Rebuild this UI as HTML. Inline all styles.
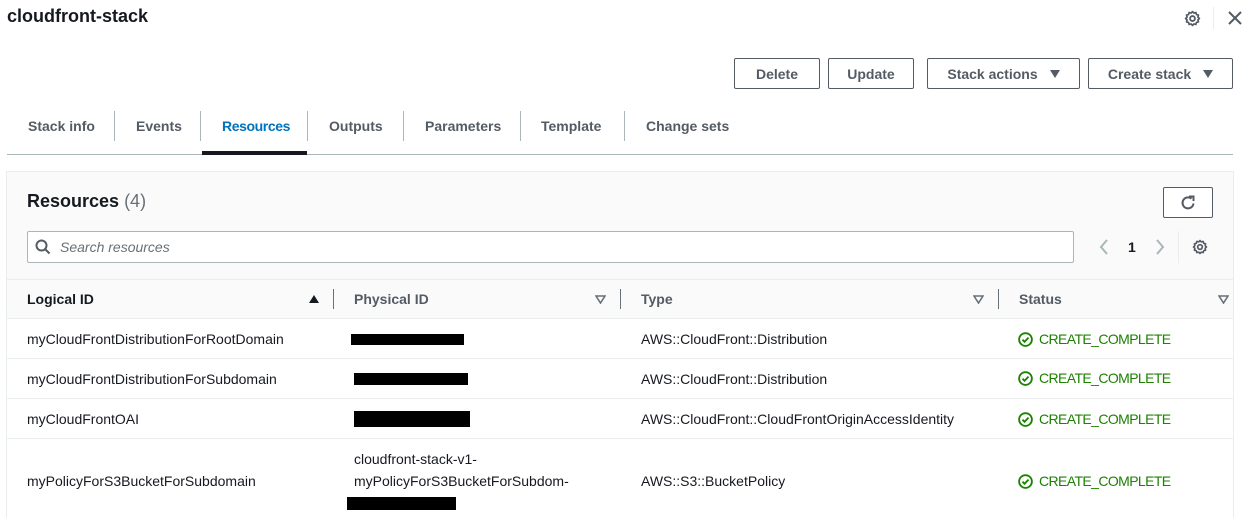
<!DOCTYPE html>
<html><head><style>
*{box-sizing:border-box;margin:0;padding:0}
html,body{width:1254px;height:518px;overflow:hidden}
body{background:#fff;font-family:"Liberation Sans",Arial,sans-serif;color:#16191f;position:relative;font-size:14px}
.a{position:absolute;white-space:nowrap}
.btn{position:absolute;top:58px;height:31px;border:1px solid #545b64;border-radius:2px;font-weight:bold;color:#545b64;font-size:14px;display:flex;align-items:center;justify-content:center;background:#fff}
.tri{display:inline-block;width:0;height:0;border-left:5px solid transparent;border-right:5px solid transparent;border-top:8px solid #545b64;margin-left:12px}
.tab{position:absolute;top:118px;font-weight:bold;color:#545b64;font-size:14px}
.tsep{position:absolute;top:111px;width:1px;height:30px;background:#aab7b8}
.hsep{position:absolute;top:289px;width:1px;height:20px;background:#687078}
.row{position:absolute;left:7px;width:1226px;height:1px;background:#eaeded}
.cell{position:absolute;font-size:14px;color:#16191f;white-space:nowrap}
.st{position:absolute;left:1018px;color:#1d8102;font-size:14px;display:flex;align-items:center;letter-spacing:-0.6px}
.st svg{margin-right:6px}
.bar{position:absolute;background:#000}
.dto{position:absolute;width:11px;height:9px}
</style></head><body>
<div class="a" style="left:7px;top:6px;font-size:18px;font-weight:bold">cloudfront-stack</div>
<svg class="a" style="left:1184px;top:10px" width="17" height="17" viewBox="0 0 16 16"><circle cx="8" cy="8" r="2.3" fill="none" stroke="#545b64" stroke-width="1.7"/><path d="M8 1.5l1.3 1.4 1.9-.5.5 1.9 1.9.5-.5 1.9 1.4 1.3-1.4 1.3.5 1.9-1.9.5-.5 1.9-1.9-.5L8 14.5l-1.3-1.4-1.9.5-.5-1.9-1.9-.5.5-1.9L1.5 8l1.4-1.3-.5-1.9 1.9-.5.5-1.9 1.9.5z" fill="none" stroke="#545b64" stroke-width="1.6" stroke-linejoin="round"/></svg>
<div class="a" style="left:1213px;top:7px;width:1px;height:22px;background:#eaeded"></div>
<svg class="a" style="left:1228px;top:11px" width="14" height="14" viewBox="0 0 14 14"><path d="M1 1L13 13M13 1L1 13" stroke="#545b64" stroke-width="2"/></svg>

<div class="btn" style="left:734px;width:86px">Delete</div>
<div class="btn" style="left:828px;width:86px">Update</div>
<div class="btn" style="left:927px;width:153px">Stack actions<span class="tri"></span></div>
<div class="btn" style="left:1088px;width:145px">Create stack<span class="tri"></span></div>

<div class="tab" style="left:28px">Stack info</div>
<div class="tsep" style="left:114px"></div>
<div class="tab" style="left:136px">Events</div>
<div class="tsep" style="left:200px"></div>
<div class="tab" style="left:222px;color:#0073bb;letter-spacing:-0.4px">Resources</div>
<div class="tsep" style="left:307px"></div>
<div class="tab" style="left:329px">Outputs</div>
<div class="tsep" style="left:403px"></div>
<div class="tab" style="left:425px">Parameters</div>
<div class="tsep" style="left:520px"></div>
<div class="tab" style="left:541px">Template</div>
<div class="tsep" style="left:624px"></div>
<div class="tab" style="left:646px">Change sets</div>
<div class="a" style="left:7px;top:154px;width:1226px;height:1px;background:#aab7b8"></div>
<div class="a" style="left:202px;top:151px;width:105px;height:4px;background:#16191f"></div>

<div class="a" style="left:6px;top:171px;width:1228px;height:360px;border:1px solid #eaeded;background:#fafafa"></div>
<div class="a" style="left:7px;top:319px;width:1226px;height:200px;background:#fff"></div>
<div class="a" style="left:27px;top:191px;font-size:18px;font-weight:bold">Resources <span style="font-weight:normal;color:#687078">(4)</span></div>
<div class="a" style="left:1163px;top:187px;width:50px;height:31px;border:1px solid #545b64;border-radius:2px;background:#fff"></div>
<svg class="a" style="left:1180px;top:195px" width="16" height="16" viewBox="0 0 16 16"><path d="M13.5 8.5A5.5 5.5 0 1 1 11.5 3.6" fill="none" stroke="#545b64" stroke-width="2"/><path d="M9 1.5h4.5V6" fill="none" stroke="#545b64" stroke-width="2"/></svg>
<div class="a" style="left:27px;top:231px;width:1047px;height:32px;border:1px solid #aab7b8;border-radius:2px;background:#fff"></div>
<svg class="a" style="left:35px;top:239px" width="16" height="16" viewBox="0 0 16 16"><circle cx="6.5" cy="6.5" r="5" fill="none" stroke="#545b64" stroke-width="2"/><path d="M10 10l4.5 4.5" stroke="#545b64" stroke-width="2"/></svg>
<div class="a" style="left:60px;top:239px;font-style:italic;color:#687078;font-size:14px">Search resources</div>
<svg class="a" style="left:1099px;top:239px" width="10" height="16" viewBox="0 0 10 16"><path d="M8 1L2 8l6 7" fill="none" stroke="#aab7b8" stroke-width="2"/></svg>
<div class="a" style="left:1128px;top:239px;font-weight:bold">1</div>
<svg class="a" style="left:1155px;top:239px" width="10" height="16" viewBox="0 0 10 16"><path d="M2 1l6 7-6 7" fill="none" stroke="#aab7b8" stroke-width="2"/></svg>
<div class="a" style="left:1178px;top:231px;width:1px;height:32px;background:#eaeded"></div>
<svg class="a" style="left:1192px;top:239px" width="16" height="16" viewBox="0 0 16 16"><circle cx="8" cy="8" r="2.3" fill="none" stroke="#545b64" stroke-width="1.7"/><path d="M8 1.5l1.3 1.4 1.9-.5.5 1.9 1.9.5-.5 1.9 1.4 1.3-1.4 1.3.5 1.9-1.9.5-.5 1.9-1.9-.5L8 14.5l-1.3-1.4-1.9.5-.5-1.9-1.9-.5.5-1.9L1.5 8l1.4-1.3-.5-1.9 1.9-.5.5-1.9 1.9.5z" fill="none" stroke="#545b64" stroke-width="1.6" stroke-linejoin="round"/></svg>

<div class="row" style="top:279px"></div>
<div class="cell" style="left:27px;top:291px;font-weight:bold">Logical ID</div>
<div class="a" style="left:309px;top:295px;width:0;height:0;border-left:5px solid transparent;border-right:5px solid transparent;border-bottom:8px solid #16191f"></div>
<div class="hsep" style="left:333px"></div>
<div class="cell" style="left:354px;top:291px;font-weight:bold;color:#545b64">Physical ID</div>
<svg class="dto" style="left:595px;top:295px" viewBox="0 0 11 9"><path d="M1 1h9L5.5 8z" fill="none" stroke="#687078" stroke-width="1.6"/></svg>
<div class="hsep" style="left:620px"></div>
<div class="cell" style="left:641px;top:291px;font-weight:bold;color:#545b64">Type</div>
<svg class="dto" style="left:973px;top:295px" viewBox="0 0 11 9"><path d="M1 1h9L5.5 8z" fill="none" stroke="#687078" stroke-width="1.6"/></svg>
<div class="hsep" style="left:998px"></div>
<div class="cell" style="left:1019px;top:291px;font-weight:bold;color:#545b64">Status</div>
<svg class="dto" style="left:1218px;top:295px" viewBox="0 0 11 9"><path d="M1 1h9L5.5 8z" fill="none" stroke="#687078" stroke-width="1.6"/></svg>
<div class="row" style="top:318px"></div>

<div class="cell" style="left:27px;top:331px">myCloudFrontDistributionForRootDomain</div>
<div class="bar" style="left:351px;top:334px;width:113px;height:11px"></div>
<div class="cell" style="left:641px;top:331px">AWS::CloudFront::Distribution</div>
<div class="st" style="top:331px"><svg width="15" height="15" viewBox="0 0 16 16"><circle cx="8" cy="8" r="6.8" fill="none" stroke="#1d8102" stroke-width="2"/><path d="M4.8 8.2l2.2 2.2 4.2-4.4" fill="none" stroke="#1d8102" stroke-width="2"/></svg>CREATE_COMPLETE</div>
<div class="row" style="top:358px"></div>

<div class="cell" style="left:27px;top:371px">myCloudFrontDistributionForSubdomain</div>
<div class="bar" style="left:354px;top:373px;width:114px;height:12px"></div>
<div class="cell" style="left:641px;top:371px">AWS::CloudFront::Distribution</div>
<div class="st" style="top:370px"><svg width="15" height="15" viewBox="0 0 16 16"><circle cx="8" cy="8" r="6.8" fill="none" stroke="#1d8102" stroke-width="2"/><path d="M4.8 8.2l2.2 2.2 4.2-4.4" fill="none" stroke="#1d8102" stroke-width="2"/></svg>CREATE_COMPLETE</div>
<div class="row" style="top:398px"></div>

<div class="cell" style="left:27px;top:411px">myCloudFrontOAI</div>
<div class="bar" style="left:354px;top:411px;width:116px;height:16px"></div>
<div class="cell" style="left:641px;top:411px">AWS::CloudFront::CloudFrontOriginAccessIdentity</div>
<div class="st" style="top:411px"><svg width="15" height="15" viewBox="0 0 16 16"><circle cx="8" cy="8" r="6.8" fill="none" stroke="#1d8102" stroke-width="2"/><path d="M4.8 8.2l2.2 2.2 4.2-4.4" fill="none" stroke="#1d8102" stroke-width="2"/></svg>CREATE_COMPLETE</div>
<div class="row" style="top:438px"></div>

<div class="cell" style="left:27px;top:473px">myPolicyForS3BucketForSubdomain</div>
<div class="cell" style="left:354px;top:451px">cloudfront-stack-v1-</div>
<div class="cell" style="left:354px;top:473px">myPolicyForS3BucketForSubdom-</div>
<div class="bar" style="left:347px;top:497px;width:109px;height:13px"></div>
<div class="cell" style="left:641px;top:473px">AWS::S3::BucketPolicy</div>
<div class="st" style="top:473px"><svg width="15" height="15" viewBox="0 0 16 16"><circle cx="8" cy="8" r="6.8" fill="none" stroke="#1d8102" stroke-width="2"/><path d="M4.8 8.2l2.2 2.2 4.2-4.4" fill="none" stroke="#1d8102" stroke-width="2"/></svg>CREATE_COMPLETE</div>
</body></html>
